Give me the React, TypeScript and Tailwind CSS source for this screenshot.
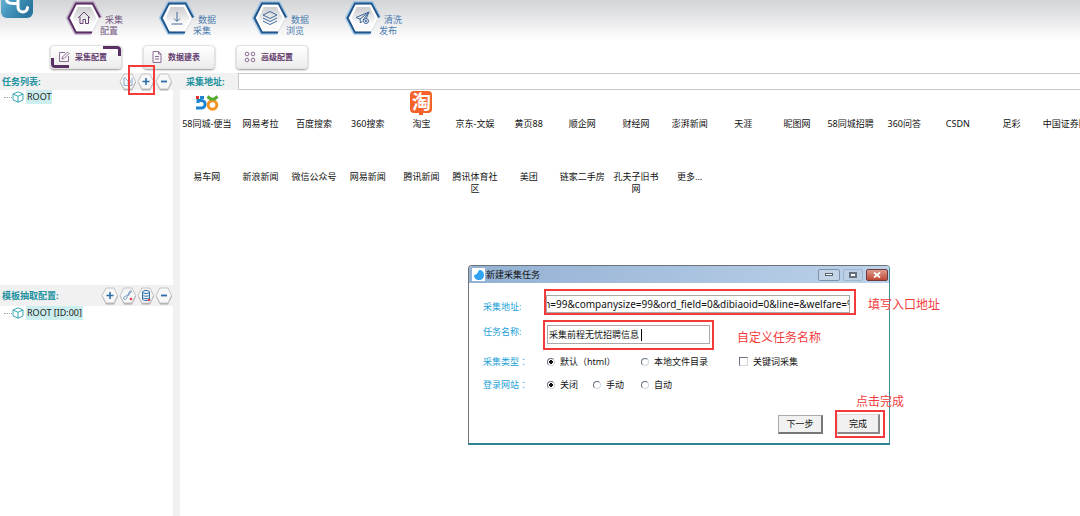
import React from "react";

const navItems = [
  { lines: ["采集", "配置"], icon: "home" },
  { lines: ["数据", "采集"], icon: "download" },
  { lines: ["数据", "浏览"], icon: "layers" },
  { lines: ["清洗", "发布"], icon: "send" },
];

const tabs = [
  { label: "采集配置", icon: "edit" },
  { label: "数据建表", icon: "file" },
  { label: "高级配置", icon: "grid" },
];

const sites = [
  "58同城-便当",
  "网易考拉",
  "百度搜索",
  "360搜索",
  "淘宝",
  "京东-文娱",
  "黄页88",
  "顺企网",
  "财经网",
  "澎湃新闻",
  "天涯",
  "昵图网",
  "58同城招聘",
  "360问答",
  "CSDN",
  "足彩",
  "中国证券网",
  "易车网",
  "新浪新闻",
  "微信公众号",
  "网易新闻",
  "腾讯新闻",
  "腾讯体育社区",
  "美团",
  "链家二手房",
  "孔夫子旧书网",
  "更多...",
];

const Logo = () => (
  <svg width="34" height="18" viewBox="0 0 34 18" className="shrink-0">
    <defs>
      <linearGradient id="logo" x1="0" y1="0" x2="1" y2="0.600">
        <stop offset="0" stopColor="#7cc4e0" />
        <stop offset="0.500" stopColor="#4596bd" />
        <stop offset="1" stopColor="#2a769f" />
      </linearGradient>
    </defs>
    <rect x="1" y="-14" width="32" height="32" rx="6" fill="url(#logo)" />
    <path
      d="M6.500 -1C6.500 3 10 4 17 3.500M18 -2V7C18 13.500 27.500 13.500 27.500 7.500"
      fill="none"
      stroke="#fff"
      strokeWidth="3"
      strokeLinecap="round"
    />
  </svg>
);

const navShapes: Record<string, React.ReactNode> = {
  home: <path d="M12 18l6-6 6 6M14 16.500v7h3v-4h2.500v4h3v-7" />,
  download: <path d="M18 12v9M15 18.500l3 3 3-3M12.500 24h11" />,
  layers: (
    <path d="M18 11.500l7 3.500-7 3.500-7-3.500zM11 18l7 3.500 7-3.500M11 21l7 3.500 7-3.500" />
  ),
  send: (
    <>
      <path d="M11 17.500l13-5.500-2.500 6M11 17.500l4 1.500 9-7-6 8M15 19l.5 4 2-2" />
      <circle cx="21" cy="21" r="2.500" />
      <circle cx="21" cy="21" r="0.800" />
    </>
  ),
};

const NavHex = ({ icon }: { icon: string }) => {
  const purple = icon === "home";
  const edge = purple ? "#5b2f66" : "#1f568e";
  const glow = purple ? "#a583b0" : "#6fb0e2";
  const id = "hex-" + icon;
  return (
    <svg width="36" height="36" viewBox="0 0 36 36" className="shrink-0">
      <defs>
        <linearGradient id={id} x1="0" y1="0" x2="0" y2="1">
          <stop offset="0" stopColor="#c4c5c8" />
          <stop offset="0.700" stopColor="#fafafa" />
        </linearGradient>
      </defs>
      <path
        d="M34 18L26.500 3.500H10L2.500 18L10 32.500H25"
        fill="none"
        stroke={glow}
        strokeWidth="5"
        strokeLinejoin="round"
        opacity="0.500"
      />
      <path
        d="M10 4H26L33.500 18L26 32H10L3 18z"
        fill={`url(#${id})`}
        stroke="#e4e4e6"
        strokeWidth="2"
      />
      <path
        d="M34 17.500L26.500 3.500H10L2.500 18L10 32.500H26"
        fill="none"
        stroke={edge}
        strokeWidth="2"
      />
      <path
        d="M11 6H25.500L31.500 18L25.500 30H11L5.500 18z"
        fill="none"
        stroke="#fff"
        strokeWidth="2"
      />
      <g fill="none" stroke={purple ? "#6a4474" : "#40699c"} strokeWidth="1">
        {navShapes[icon]}
      </g>
    </svg>
  );
};

const TabIcon = ({ icon }: { icon: string }) => (
  <svg
    width="12"
    height="12"
    viewBox="0 0 12 12"
    fill="none"
    stroke="#8d6e96"
    className="shrink-0"
  >
    {icon === "edit" && <path d="M7 1.500H1.500v9h9V5M4 8l.5-2L9.500 1l1.500 1.500L6 7.500z" />}
    {icon === "file" && <path d="M2 .5h5.500L10 3v8.500H2zM7.500 .5V3H10M4 5.500h4M4 8h4" />}
    {icon === "grid" && (
      <>
        <circle cx="3" cy="3" r="1.800" />
        <circle cx="9" cy="3" r="1.800" />
        <circle cx="3" cy="9" r="1.800" />
        <circle cx="9" cy="9" r="1.800" />
      </>
    )}
  </svg>
);

const HexButton = ({ icon, title }: { icon: string; title: string }) => (
  <button type="button" aria-label={title} className="shrink-0">
    <svg width="18" height="18" viewBox="0 0 18 18" fill="none">
      <path d="M5 2H13L17 9.500L13 17.500H5L1 9.500z" fill="#a9a9a9" />
      <path d="M5 1H13L16.500 8.500L13 16H5L1 8.500z" fill="#f7f7f7" stroke="#c4c4c4" />
      <g stroke="#2c6cab">
        {icon === "plus" && <path d="M9 5v7M5.500 8.500h7" strokeWidth="1.600" />}
        {icon === "minus" && <path d="M6 8.500h6" strokeWidth="1.800" />}
        {icon === "import" && (
          <path d="M5 5h2M5 5v7.500h8V5M7 6l4 4M11 7v3H8" stroke="#86a9cc" />
        )}
        {icon === "link" && (
          <>
            <path
              d="M5 12c-1-2 1-3 2-3s2 1 1 2-2 2-3 1zM8 9l3-5c1-1 2 0 1 1L9 9"
              stroke="#7296c4"
            />
            <circle cx="12" cy="12" r="1.300" fill="#e0424a" stroke="none" />
          </>
        )}
        {icon === "db" && (
          <>
            <ellipse cx="9" cy="5" rx="3.500" ry="1.500" />
            <path d="M5.500 5v7c0 2 7 2 7 0V5M5.500 8c0 1.500 7 1.500 7 0M5.500 10.500c0 1.500 7 1.500 7 0" />
            <circle cx="12" cy="13" r="1.300" fill="#e0424a" stroke="none" />
          </>
        )}
      </g>
    </svg>
  </button>
);

const TreeNode = ({ label }: { label: string }) => (
  <div className="flex items-center pl-1">
    <span className="w-2 border-t border-dotted border-gray-400" />
    <svg width="12" height="12" viewBox="0 0 12 12" fill="none" stroke="#35a7b3">
      <path d="M6 .8L11 3v5.800L6 11.300L1 8.800V3zM1 3l5 2.300L11 3M6 5.300v6" />
    </svg>
    <span className="ml-[2px] bg-[#cdeeee] px-px leading-[14px] text-[#222]">{label}</span>
  </div>
);

const SiteIcon = ({ name }: { name: string }) => {
  if (name === "58同城-便当") {
    return (
      <svg width="24" height="18" viewBox="0 0 24 18" fill="none" strokeWidth="3">
        <path d="M3 9V5M2.500 6.500H6c5.500 0 5.500 7.500 0 7.500H1" stroke="#1b84d0" />
        <path d="M1 3.500h3" stroke="#e2342d" />
        <path d="M5 3.500h4" stroke="#1b84d0" />
        <circle cx="17.500" cy="11" r="4.300" stroke="#f59320" />
        <path d="M12.500 2.500l3 2.500h4l3-2.500" stroke="#55a92e" />
      </svg>
    );
  }
  if (name === "淘宝") {
    return (
      <span className="flex flex-col items-center">
        <span className="flex size-[22px] items-center justify-center rounded-sm bg-[#f4622a] text-[19px] leading-[20px] font-bold text-white">
          淘
        </span>
        <span className="h-[2px] w-1 bg-[#f4622a]" />
      </span>
    );
  }
  return null;
};

const Radio = ({
  name,
  label,
  checked,
  className,
}: {
  name: string;
  label: string;
  checked?: boolean;
  className?: string;
}) => (
  <label className={"flex items-center gap-[5px] " + (className ?? "")}>
    <input
      type="radio"
      name={name}
      defaultChecked={checked}
      className="size-2 appearance-none rounded-full border border-gray-300 border-t-gray-500 border-l-gray-500 bg-white bg-clip-padding checked:bg-[radial-gradient(circle,#111_45%,#fff_50%)]"
    />
    {label}
  </label>
);

const Dialog = () => (
  <div
    role="dialog"
    aria-label="新建采集任务"
    className="absolute top-[265px] left-[468px] w-[422px] rounded-t-sm border border-b-2 border-[#6b7478] border-r-[#3f8d98] border-b-[#2d8290] bg-white text-[10px] leading-4"
  >
    <div className="flex h-[17px] items-center gap-px rounded-t-sm bg-linear-to-r from-[#94b1d3] to-[#bdd2ea] pl-[3px] text-[9px] text-[#111]">
      <span className="flex size-[13px] items-center justify-center bg-white">
        <svg width="10" height="10" viewBox="0 0 10 10">
          <path d="M5 0C8 0 10 2 10 5S8 10 5 10S0 8 0 5C2 5 4 3 5 0z" fill="#31a3f3" />
        </svg>
      </span>
      <span>新建采集任务</span>
      <div className="ml-auto flex gap-[3px] pr-px">
        <button
          type="button"
          aria-label="最小化"
          className="flex h-3 w-[22px] items-center justify-center rounded-xs border border-[#7d93ac] bg-[#c3d4e7]"
        >
          <span className="h-[3px] w-2 border border-[#55606e] bg-white" />
        </button>
        <button
          type="button"
          aria-label="最大化"
          className="flex h-3 w-5 items-center justify-center rounded-xs border border-[#9fb5ce] bg-[#bccfe5]"
        >
          <span className="h-[6px] w-2 border-2 border-[#66717f] bg-white" />
        </button>
        <button
          type="button"
          aria-label="关闭"
          className="flex h-3 w-[22px] items-center justify-center rounded-xs border border-[#6e3a3a] bg-linear-to-b from-[#dd9a8d] to-[#bd4634]"
        >
          <svg width="8" height="6" viewBox="0 0 8 6" stroke="#fff" strokeWidth="1.800">
            <path d="M1 .5l6 5M7 .5l-6 5" />
          </svg>
        </button>
      </div>
    </div>

    <form className="pt-[6px] pl-[14px] text-[9px] text-[#111]">
      <div className="flex items-end">
        <label htmlFor="url" className="w-[61px] text-[#1c9fd8]">
          采集地址:
        </label>
        <div className="flex h-[26px] w-[312px] items-end border-2 border-[#f23c3c] pr-1">
          <input
            id="url"
            defaultValue="m=99&companysize=99&ord_field=0&dibiaoid=0&line=&welfare=%"
            className="h-[18px] w-full border border-[#a9a9a9] indent-[-6px] text-[10px]"
          />
        </div>
      </div>

      <div className="mt-[5px] flex">
        <label htmlFor="task" className="w-[60px] pt-1 text-[#1c9fd8]">
          任务名称:
        </label>
        <div className="h-[30px] w-[171px] border-2 border-[#f23c3c] px-[2px] pt-[3px]">
          <div className="flex h-[19px] items-center border border-[#a9a9a9] pl-px">
            <input
              id="task"
              defaultValue="采集前程无忧招聘信息"
              className="h-3 w-[93px] border-r border-black"
            />
          </div>
        </div>
      </div>

      <div className="flex h-[23px] items-center">
        <span className="w-[64px] font-['Noto_Sans_CJK_TC',sans-serif] text-[#1c9fd8]">
          采集类型：
        </span>
        <Radio name="type" label="默认（html）" checked className="w-[94px]" />
        <Radio name="type" label="本地文件目录" className="w-[98px]" />
        <label className="flex items-center gap-[5px]">
          <input
            type="checkbox"
            className="size-[9px] appearance-none border border-gray-300 border-t-gray-500 border-l-gray-500 bg-white"
          />
          关键词采集
        </label>
      </div>

      <div className="flex h-[23px] items-center">
        <span className="w-[64px] font-['Noto_Sans_CJK_TC',sans-serif] text-[#1c9fd8]">
          登录网站：
        </span>
        <Radio name="login" label="关闭" checked className="w-[46px]" />
        <Radio name="login" label="手动" className="w-12" />
        <Radio name="login" label="自动" />
      </div>

      <div className="flex items-center justify-end gap-3 pt-[14px] pr-1 pb-[5px]">
        <button
          type="button"
          className="h-[19px] w-[45px] border border-r-2 border-b-2 border-[#aaa] border-r-[#777] border-b-[#777] bg-[#f1f1f1]"
        >
          下一步
        </button>
        <div className="border-2 border-[#f23c3c] py-[2px] pr-[3px]">
          <button
            type="button"
            className="block h-5 w-[43px] border border-r-2 border-b-2 border-[#ddd] border-r-[#888] border-b-[#888] bg-[#f1f1f1]"
          >
            完成
          </button>
        </div>
      </div>
    </form>
  </div>
);

const App = () => {
  return (
    <div className="relative flex min-h-screen flex-col overflow-hidden bg-white font-['Noto_Sans','Noto_Sans_CJK_SC',sans-serif] text-[9px] text-[#222]">
      <header className="h-[73px] bg-linear-to-b from-[#d3d4d7] to-white to-[40px]">
        <div className="flex h-[45px] items-start">
          <Logo />
          <nav className="flex pl-8">
            {navItems.map((item, i) => (
              <a
                key={item.icon}
                href="#"
                className={
                  "flex w-[93px] items-start " + (i === 0 ? "text-[#75577f]" : "text-[#4b7cae]")
                }
              >
                <NavHex icon={item.icon} />
                <span className="-ml-1 pt-[14px] leading-[11px]">
                  <span className="block pl-[7px]">{item.lines[0]}</span>
                  <span className="block pl-[2px]">{item.lines[1]}</span>
                </span>
              </a>
            ))}
          </nav>
        </div>
        <div className="flex gap-[21px] pl-[50px]">
          {tabs.map((tab, i) => (
            <button
              key={tab.label}
              type="button"
              className="relative flex h-6 w-[72px] items-center gap-[5px] rounded-sm border border-[#e3e3e3] bg-linear-to-b from-white to-[#ececec] pl-[7px] text-[8px] font-bold text-[#64406f] shadow-[0_1px_2px_#999]"
            >
              <TabIcon icon={tab.icon} />
              <span>{tab.label}</span>
              {i === 0 && (
                <>
                  <span className="absolute top-0 right-0 h-[10px] w-[18px] rounded-tr-sm border-t-3 border-r-3 border-[#5a3064]" />
                  <span className="absolute bottom-0 left-0 h-[10px] w-[18px] rounded-bl-sm border-b-3 border-l-3 border-[#5a3064]" />
                </>
              )}
            </button>
          ))}
        </div>
      </header>

      <div className="flex flex-1">
        <aside className="flex w-[180px] shrink-0 flex-col border-r-7 border-[#f1f1f1]">
          <section className="h-[212px]">
            <div className="relative flex h-[17px] items-center justify-between bg-[#f1f1f1] pl-[2px]">
              <h2 className="font-bold text-[#22929f]">任务列表:</h2>
              <div className="flex">
                <HexButton icon="import" title="导入" />
                <HexButton icon="plus" title="新建" />
                <HexButton icon="minus" title="删除" />
              </div>
              <span className="pointer-events-none absolute -top-2 right-[18px] h-[30px] w-[27px] border-2 border-[#f23c3c]" />
            </div>
            <TreeNode label="ROOT" />
          </section>
          <section>
            <div className="flex h-[21px] items-center justify-between bg-[#f1f1f1] pl-[2px]">
              <h2 className="font-bold text-[#22929f]">模板抽取配置:</h2>
              <div className="flex">
                <HexButton icon="plus" title="新建" />
                <HexButton icon="link" title="链接" />
                <HexButton icon="db" title="数据" />
                <HexButton icon="minus" title="删除" />
              </div>
            </div>
            <TreeNode label="ROOT [ID:00]" />
          </section>
        </aside>

        <main className="min-w-0 flex-1 overflow-hidden">
          <div className="-mr-px flex h-[17px] items-center bg-[#f1f1f1]">
            <label htmlFor="address" className="w-[58px] pl-[6px] font-bold text-[#22929f]">
              采集地址:
            </label>
            <input id="address" className="h-[17px] flex-1 border border-[#c9c9c9] bg-white" />
          </div>
          <div className="-mr-3 grid grid-cols-[repeat(17,minmax(0,1fr))] gap-y-[14px] pt-px">
            {sites.map((site) => (
              <a
                key={site}
                href="#"
                className="flex flex-col items-center px-px text-center leading-3 text-[#111]"
              >
                <span className="mb-[3px] flex h-6 items-center">
                  <SiteIcon name={site} />
                </span>
                <span>{site}</span>
              </a>
            ))}
          </div>
        </main>
      </div>

      <Dialog />

      <div className="pointer-events-none text-xs text-[#f23c3c]">
        <span className="absolute top-[297px] left-[868px]">填写入口地址</span>
        <span className="absolute top-[330px] left-[737px]">自定义任务名称</span>
        <span className="absolute top-[394px] left-[856px]">点击完成</span>
      </div>
    </div>
  );
};

export default App;
